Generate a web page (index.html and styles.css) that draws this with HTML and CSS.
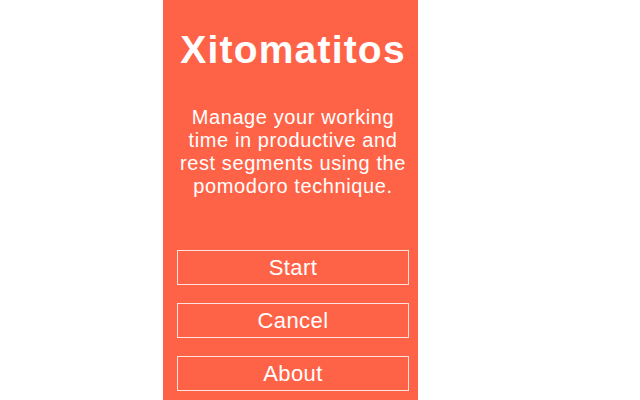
FILE: index.html
```html
<!DOCTYPE html>
<html lang="en">
<head>
<meta charset="utf-8">
<title>Xitomatitos</title>
<link rel="stylesheet" href="styles.css">
</head>
<body>
<main class="panel">
  <h1 class="title">Xitomatitos</h1>
  <p class="intro">Manage your working time in productive and rest segments using the pomodoro technique.</p>
  <nav class="actions">
    <button class="btn">Start</button>
    <button class="btn">Cancel</button>
    <button class="btn">About</button>
  </nav>
</main>
</body>
</html>
```
FILE: styles.css
```css
html, body {
  margin: 0;
  padding: 0;
  height: 100%;
  background: #ffffff;
}

body {
  font-family: "Liberation Sans", Arial, sans-serif;
  color: #ffffff;
}

.panel {
  margin-left: 163px;
  width: 255px;
  height: 400px;
  box-sizing: border-box;
  background: #ff6347;
  padding: 28px 9px 0 14px;
  display: flex;
  flex-direction: column;
  align-items: stretch;
}

.title {
  margin: 0;
  font-size: 39px;
  line-height: 44px;
  font-weight: bold;
  letter-spacing: 1.2px;
  text-align: center;
}

.intro {
  margin: 34px 0 0 0;
  font-size: 20px;
  line-height: 23px;
  letter-spacing: 0.6px;
  text-align: center;
}

.actions {
  margin-top: 52px;
  display: flex;
  flex-direction: column;
  gap: 18px;
}

.btn {
  height: 35px;
  box-sizing: border-box;
  margin: 0;
  padding: 0;
  background: transparent;
  border: 1px solid #ffe2dc;
  color: #ffffff;
  font-family: "Liberation Sans", Arial, sans-serif;
  font-size: 22px;
  line-height: 33px;
  letter-spacing: 0.4px;
  text-align: center;
}
```
